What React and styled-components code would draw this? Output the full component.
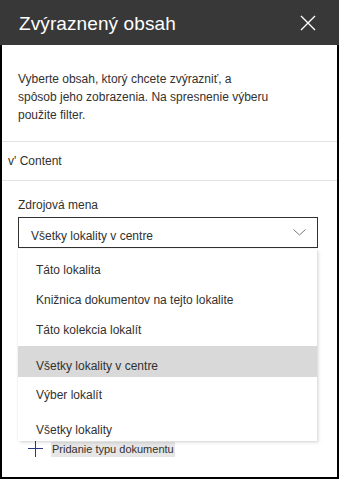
import styled, { createGlobalStyle } from "styled-components";

const GlobalStyle = createGlobalStyle`
  html, body {
    margin: 0;
    padding: 0;
    background: #ffffff;
  }
  * {
    box-sizing: border-box;
  }
  body {
    font-family: "Liberation Sans", Arial, sans-serif;
    color: #323130;
  }
`;

const Panel = styled.div`
  width: 339px;
  height: 479px;
  display: flex;
  flex-direction: column;
  background: #ffffff;
`;

const Header = styled.div`
  height: 45px;
  flex-shrink: 0;
  background: #383838;
  display: flex;
  align-items: center;
  justify-content: space-between;
  padding: 2px 23px 0 19px;
  color: #ffffff;
`;

const Title = styled.h1`
  margin: 0;
  font-size: 19px;
  font-weight: normal;
  letter-spacing: 0.1px;
`;

const CloseButton = styled.button`
  width: 16px;
  height: 16px;
  padding: 0;
  border: none;
  background: none;
  display: flex;
  margin-top: -1px;
`;

const Body = styled.div`
  flex: 1;
  border: 2px solid #000000;
  border-top: none;
  display: flex;
  flex-direction: column;
`;

const Description = styled.p`
  margin: 0;
  padding: 25px 0 17px 16px;
  font-size: 12px;
  line-height: 18px;
  border-bottom: 1px solid #e3e3e3;

  > span {
    display: block;
    width: 252px;
  }
`;

const SectionRow = styled.div`
  height: 39px;
  padding-left: 6px;
  display: flex;
  align-items: center;
  font-size: 12px;
  border-bottom: 1px solid #e3e3e3;
`;

const Form = styled.div`
  padding: 0 0 0 16px;
  display: flex;
  flex-direction: column;
`;

const Label = styled.label`
  margin-top: 16px;
  margin-bottom: 4px;
  font-size: 12px;
  line-height: 16px;
`;

const DropdownWrap = styled.div`
  position: relative;
  width: 300px;
`;

const SelectBox = styled.div`
  height: 31px;
  border: 1px solid #323130;
  display: flex;
  align-items: center;
  justify-content: space-between;
  padding: 0 11px 0 12px;
  font-size: 12px;

  > span {
    padding-top: 7px;
  }
`;

const Menu = styled.ul`
  position: absolute;
  z-index: 2;
  top: 32px;
  left: 0;
  width: 299px;
  margin: 0;
  padding: 6px 0 0 0;
  list-style: none;
  background: #ffffff;
  box-shadow: 0 0 2px rgba(0, 0, 0, 0.12), 2px 2px 3px rgba(0, 0, 0, 0.1);
`;

const MenuItem = styled.li`
  height: ${(props) => props.$h}px;
  margin-top: ${(props) => props.$mt || 0}px;
  padding: ${(props) => props.$pt || 0}px 0 0 18px;
  display: flex;
  align-items: center;
  font-size: 12px;
  background: ${(props) => (props.$selected ? "#d9d9d9" : "transparent")};
`;

const AddRow = styled.div`
  margin-top: 193px;
  padding-left: 10px;
  height: 16px;
  display: flex;
  align-items: center;
  gap: 8px;
  font-size: 11px;

  > span {
    background: #e6e6e6;
    padding: 0 1px;
    line-height: 15px;
  }
`;

const options = [
  { label: "Táto lokalita", h: 30 },
  { label: "Knižnica dokumentov na tejto lokalite", h: 30 },
  { label: "Táto kolekcia lokalít", h: 30 },
  { label: "Všetky lokality v centre", h: 31, mt: 1, pt: 8, selected: true },
  { label: "Výber lokalít", h: 36 },
  { label: "Všetky lokality", h: 28, pt: 6 },
];

const App = () => {
  return (
    <>
      <GlobalStyle />
      <Panel>
        <Header>
          <Title>Zvýraznený obsah</Title>
          <CloseButton aria-label="Zavrieť">
            <svg width="16" height="16" viewBox="0 0 16 16">
              <path
                d="M1 1 L15 15 M15 1 L1 15"
                stroke="#ffffff"
                strokeWidth="1.4"
                fill="none"
              />
            </svg>
          </CloseButton>
        </Header>
        <Body>
          <Description>
            <span>
              Vyberte obsah, ktorý chcete zvýrazniť, a spôsob jeho zobrazenia.
              Na spresnenie výberu použite filter.
            </span>
          </Description>
          <SectionRow>v' Content</SectionRow>
          <Form>
            <Label>Zdrojová mena</Label>
            <DropdownWrap>
              <SelectBox>
                <span>Všetky lokality v centre</span>
                <svg width="13" height="7" viewBox="0 0 13 7">
                  <path
                    d="M0.5 0.5 L6.5 6 L12.5 0.5"
                    stroke="#7a7a7a"
                    strokeWidth="1"
                    fill="none"
                  />
                </svg>
              </SelectBox>
              <Menu>
                {options.map((opt) => (
                  <MenuItem
                    key={opt.label}
                    $h={opt.h}
                    $mt={opt.mt}
                    $pt={opt.pt}
                    $selected={opt.selected}
                  >
                    {opt.label}
                  </MenuItem>
                ))}
              </Menu>
            </DropdownWrap>
            <AddRow>
              <svg width="15" height="16" viewBox="0 0 15 16">
                <path
                  d="M7.5 0 L7.5 16 M0 7.5 L15 7.5"
                  stroke="#2b3580"
                  strokeWidth="1"
                  fill="none"
                />
              </svg>
              <span>Pridanie typu dokumentu</span>
            </AddRow>
          </Form>
        </Body>
      </Panel>
    </>
  );
};

export default App;
